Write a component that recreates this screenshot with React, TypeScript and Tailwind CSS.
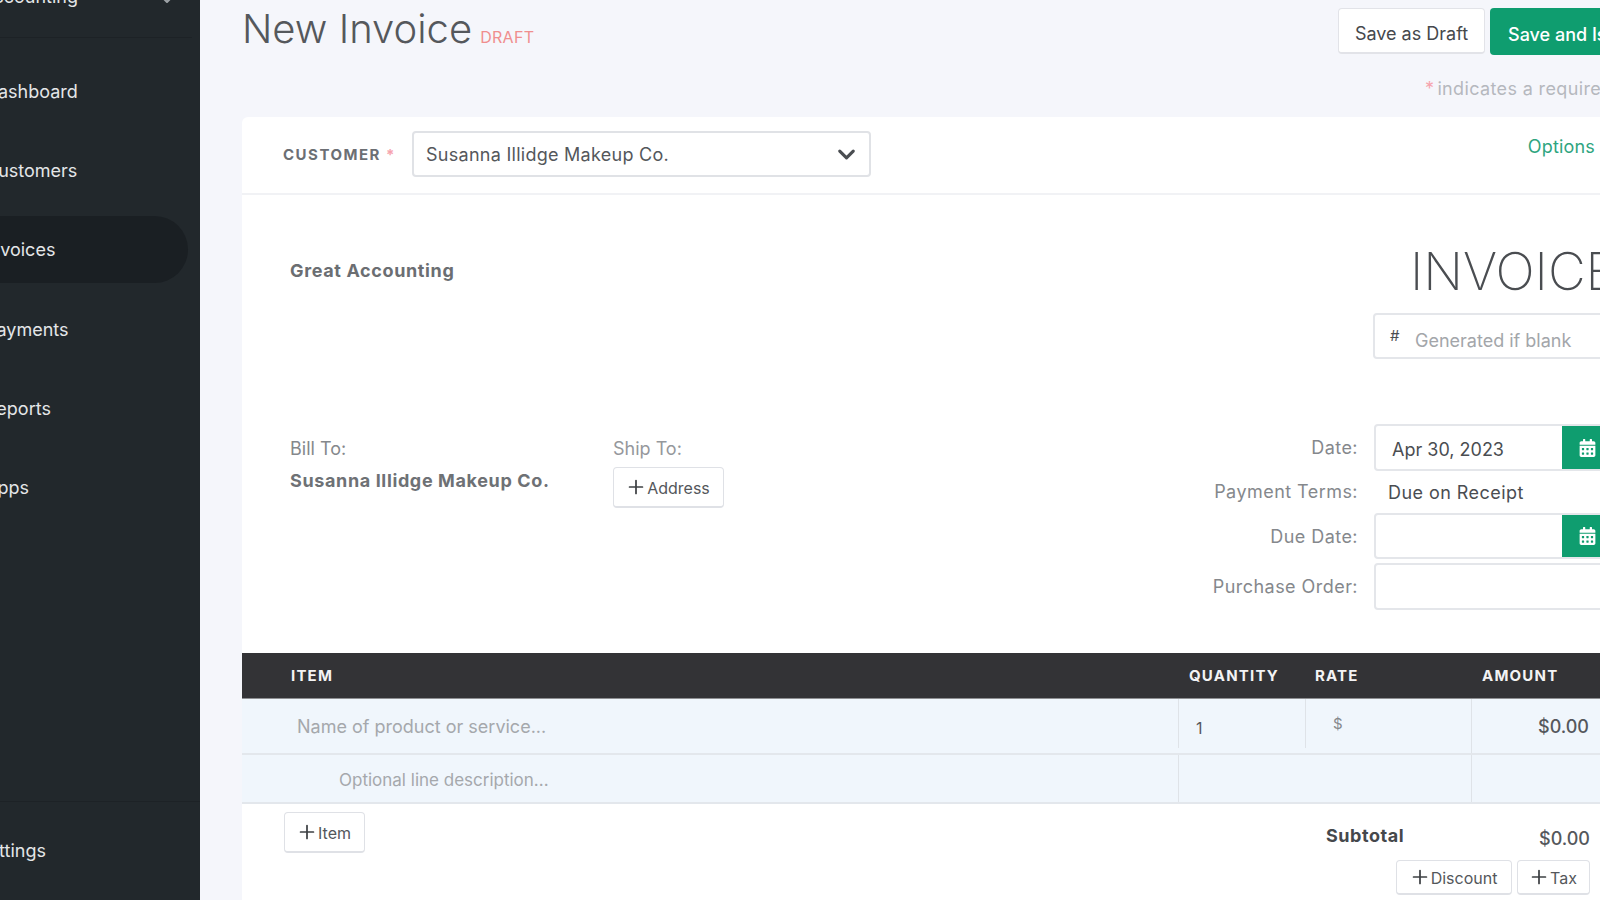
import type { ReactNode } from "react";
import { ChevronDown, Plus } from "lucide-react";
import { FaCalendarAlt } from "react-icons/fa";

const nav = ["Dashboard", "Customers", "Invoices", "Payments", "Reports", "Apps"];

function Btn({ label, cls }: { label: string; cls: string }) {
  return (
    <div className={`flex items-center justify-center bg-white border border-[#dfe1e6] rounded-[4px] border-b-2 text-[#54575b] text-[16px] ${cls}`}>
      <Plus size={22} strokeWidth={1.9} className="text-[#3d4043] -ml-[2px]" />
      <span className="mt-[2px]">{label}</span>
    </div>
  );
}

function Field({ green, children }: { green?: boolean; children?: ReactNode }) {
  return (
    <div className="flex h-full border-2 border-[#e4e6ea] rounded-[4px] overflow-hidden">
      <div className="flex-1 flex items-center pl-[16px] text-[18px] text-[#4a4d51]">{children}</div>
      {green && (
        <div className="w-[86px] -my-[2px] bg-[#0f9d6f] flex items-center pl-[17px] text-white">
          <FaCalendarAlt className="w-[17px] h-[18px]" />
        </div>
      )}
    </div>
  );
}

export default function App() {
  return (
    <div className="flex w-[1600px] h-[900px] overflow-hidden bg-[#f5f6fb] font-['Inter',sans-serif]">
      <aside className="w-[200px] shrink-0 bg-[#22282c] flex flex-col text-[#e4e6e8] text-[18px] overflow-hidden">
        <div className="h-[38px] shrink-0 border-b border-[#1d2226] mr-[8px] -ml-[14px] relative">
          <span className="absolute -left-[5px] -top-[15px] leading-[24px]">Accounting</span>
          <ChevronDown size={16} strokeWidth={3} className="absolute left-[173px] -top-[8px] text-[#9ea3a7]" />
        </div>
        <nav className="flex flex-col gap-[12.4px] mt-[19px]">
          {nav.map((n) => (
            <div
              key={n}
              className={`h-[67px] shrink-0 flex items-center pl-[3px] pt-[1px] -ml-[18px] w-[206px] rounded-r-full ${n === "Invoices" ? "bg-[#1a1f23]" : ""}`}
            >
              {n}
            </div>
          ))}
        </nav>
        <div className="mt-auto h-[99px] shrink-0 border-t border-[#1d2226] flex items-center -ml-[23px] -mt-[1px] pb-[2px]">
          Settings
        </div>
      </aside>

      <main className="w-[1400px] shrink-0 pl-[42px] flex flex-col">
        <div className="w-[1408px]">
          <div className="flex items-center justify-between pt-[8px]">
            <div className="flex items-baseline gap-[8px] -mt-[5px]">
              <span className="text-[40px] leading-[48px] font-light text-[#55585c]">New Invoice</span>
              <span className="text-[16px] tracking-[0.02em] text-[#f08e8e] uppercase">Draft</span>
            </div>
            <div className="flex gap-[5px]">
              <div className="w-[147px] h-[46px] pt-[5px] flex items-center justify-center bg-white border border-[#e2e3e8] border-b-2 rounded-[4px] text-[18px] text-[#45484c]">
                Save as Draft
              </div>
              <div className="w-[160px] h-[47px] pt-[5px] pl-[18px] flex items-center justify-start bg-[#0f9d6f] rounded-[4px] text-[18px] font-medium text-white whitespace-nowrap">
                Save and Issue
              </div>
            </div>
          </div>

          <div className="mt-[22px] h-[24px] leading-[24px] flex pl-[1183px] text-[18px] tracking-[0.02em] text-[#b5b8be] gap-[3px] whitespace-nowrap">
            <span className="text-[#f6a3ae]">*</span>
            <span>indicates a required field</span>
          </div>

          <section className="mt-[16px] bg-white rounded-t-[6px]">
            <div className="h-[78px] border-b-2 border-[#f1f2f5] flex items-center pl-[41px] pr-[55px]">
              <span className="w-[130px] text-[15px] font-bold tracking-[0.1em] text-[#6c6f74] whitespace-nowrap">
                CUSTOMER <span className="text-[#f6a3ae]">*</span>
              </span>
              <div className="w-[459px] -ml-[1px] -mt-[2px] h-[46px] border-2 border-[#e0e2e6] rounded-[4px] flex items-center justify-between pl-[12px] pr-[9px] text-[18px] tracking-[0.015em] text-[#54575b]">
                <span>Susanna Illidge Makeup Co.</span>
                <ChevronDown size={27} strokeWidth={2.8} className="text-[#4a4d51]" />
              </div>
              <span className="ml-auto self-start mt-[16px] text-[18px] tracking-[0.01em] text-[#2fa57f]">Options</span>
            </div>

            <div className="flex justify-between">
              <div className="pl-[48px] pt-[64px] text-[18px] leading-[24px] font-bold tracking-[0.035em] text-[#6b6e72]">Great Accounting</div>
              <div className="w-[277px] pt-[47px]">
                <div className="pl-[37px] text-[52px] leading-[60px] font-extralight text-[#4a4d51] whitespace-nowrap">INVOICE</div>
                <div className="mt-[11px] h-[46px] border-2 border-[#e4e6ea] rounded-[4px] flex items-center pl-[15px] text-[18px] text-[#a3a6aa]">
                  <span className="w-[25px] text-[15px] text-[#4a4d51]">#</span>
                  <span className="mt-[8px]">Generated if blank</span>
                </div>
              </div>
            </div>

            <div className="flex justify-between mt-[65px]">
              <div className="flex pl-[48px] pt-[13px] text-[18px] leading-[24px]">
                <div className="w-[323px]">
                  <div className="text-[#85888c]">Bill To:</div>
                  <div className="mt-[8px] font-bold tracking-[0.035em] text-[#6e7175]">Susanna Illidge Makeup Co.</div>
                </div>
                <div>
                  <div className="text-[#95989c]">Ship To:</div>
                  <Btn label="Address" cls="w-[111px] h-[41px] mt-[6px]" />
                </div>
              </div>
              <div className="grid grid-cols-[auto_276px] gap-x-[16px] text-[18px] tracking-[0.025em] text-[#85888c] justify-end">
                <div className="h-[47px] pb-[1px] flex items-center justify-end">Date:</div>
                <div className="h-[47px] tracking-normal"><Field green><span className="mt-[4px]">Apr 30, 2023</span></Field></div>
                <div className="h-[42px] pb-[1px] flex items-center justify-end">Payment Terms:</div>
                <div className="h-[42px] flex items-center pl-[14px] text-[#4a4d51]">Due on Receipt</div>
                <div className="h-[46px] flex items-center justify-end">Due Date:</div>
                <div className="h-[46px]"><Field green /></div>
                <div className="h-[47px] mt-[4px] pb-[1px] flex items-center justify-end">Purchase Order:</div>
                <div className="h-[47px] mt-[4px]"><Field /></div>
              </div>
            </div>

            <div className="mt-[43px] grid grid-cols-[936px_127px_166px_179px] h-[46px] pt-[2px] bg-[#333336] items-center text-[15px] font-bold tracking-[0.08em] text-[#f3f3f4] border-b border-[#8e8f92]">
              <span className="pl-[49px]">ITEM</span>
              <span className="pl-[11px]">QUANTITY</span>
              <span className="pl-[10px]">RATE</span>
              <span className="pl-[11px]">AMOUNT</span>
            </div>
            <div className="grid grid-cols-[936px_127px_166px_179px] h-[56px] bg-[#f0f6fc] border-b-2 border-[#e3e7ec]">
              <div className="pl-[55px] flex items-center text-[18px] text-[#a5a8ac]">Name of product or service...</div>
              <div className="h-[49px] border-l border-[#dfe3e8] pl-[17px] flex items-center text-[16px] text-[#55585c]"><span className="mt-[8px]">1</span></div>
              <div className="h-[49px] border-l border-[#dfe3e8] pl-[27px] pt-[2px] flex items-center text-[15px] text-[#85888c]">$</div>
              <div className="border-l border-[#dfe3e8] pr-[61px] flex items-center justify-end text-[18px] font-medium text-[#55585c]">$0.00</div>
            </div>
            <div className="grid grid-cols-[936px_293px_179px] h-[49px] bg-[#f0f6fc] border-b-2 border-[#e3e7ec]">
              <div className="pl-[97px] pt-[4px] flex items-center text-[17px] text-[#a5a8ac]">Optional line description...</div>
              <div className="border-l border-[#dfe3e8]" />
              <div className="border-l border-[#dfe3e8]" />
            </div>

            <div className="flex pl-[42px] pr-[60px] h-[200px]">
              <Btn label="Item" cls="w-[81px] h-[41px] mt-[8px]" />
              <div className="ml-auto w-[264px]">
                <div className="mt-[20px] h-[26px] flex justify-between items-start">
                  <span className="text-[18px] leading-[24px] font-bold tracking-[0.03em] text-[#45484c]">Subtotal</span>
                  <span className="text-[18px] leading-[24px] mt-[3px] font-medium text-[#55585c]">$0.00</span>
                </div>
                <div className="mt-[10px] flex justify-end gap-[5px]">
                  <Btn label="Discount" cls="w-[116px] h-[35px]" />
                  <Btn label="Tax" cls="w-[73px] h-[35px]" />
                </div>
              </div>
            </div>
          </section>
        </div>
      </main>
    </div>
  );
}
